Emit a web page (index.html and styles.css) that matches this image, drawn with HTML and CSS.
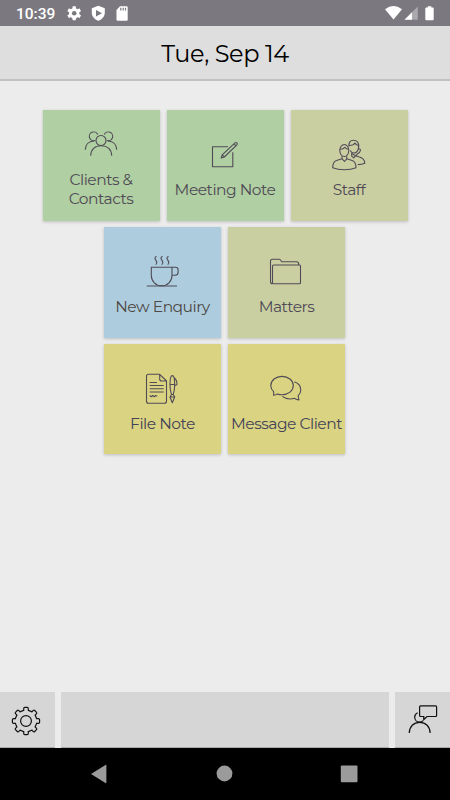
FILE: index.html
```
<!DOCTYPE html>
<html lang="en">
<head>
    <meta charset="UTF-8">
    <meta name="viewport" content="width=device-width, initial-scale=1.0">
    <title>Dashboard</title>
    <link rel="stylesheet" href="styles.css">
</head>
<body>
    <div class="status-bar">
        <span class="clock">10:39</span>
        <svg class="status-icons" width="64" height="18" viewBox="0 0 64 18">
            <g transform="translate(7.2 9.2)">
                <rect x="-1.7" y="-7" width="3.4" height="14" rx=".6"/>
                <rect x="-1.7" y="-7" width="3.4" height="14" rx=".6" transform="rotate(60)"/>
                <rect x="-1.7" y="-7" width="3.4" height="14" rx=".6" transform="rotate(120)"/>
                <circle r="3.7" fill="none" stroke="#fff" stroke-width="3"/>
                <circle r="2.3" fill="#7b797f"/>
            </g>
            <path d="M31.3 1.8l6.5 2.4v4.6c0 3.6-2.6 6.6-6.5 8-3.9-1.4-6.5-4.4-6.5-8V4.2z"/>
            <path d="M29 6l6 3.3-6 3.3z" fill="#7b797f"/>
            <path d="M53 2.2h6.4q1.3 0 1.3 1.3v12q0 1.3-1.3 1.3h-8.6q-1.3 0-1.3-1.3v-9.6z"/>
            <path d="M53.8 3.8v2.6M56.2 3.8v2.6M58.5 3.8v2.6" stroke="#7b797f" stroke-width="1.2"/>
        </svg>
        <svg class="signal-icons" width="50" height="18" viewBox="0 0 50 18">
            <path d="M0 5.2Q8.5-1.2 17 5.2L8.5 15.5z"/>
            <path d="M32.8 2.5v13.3H19.5z" fill="#aaa9ad"/>
            <path d="M27 8.3v7.5h-7.5z"/>
            <path d="M42.7 2.2h3.6v1.3h1.4q1 0 1 1v10.8q0 1-1 1h-6.4q-1 0-1-1V4.5q0-1 1-1h1.4z"/>
        </svg>
    </div>

    <header class="header">
        <h1>Tue, Sep 14</h1>
    </header>

    <main class="tiles">
        <div class="row">
            <a class="tile tall green">
                <svg class="icon" viewBox="0 0 48 48">
                    <circle cx="24" cy="18.5" r="5"/>
                    <path d="M13.7 33.8C13.7 27.5 18 23.8 24.2 23.8S34.7 27.5 34.7 33.8"/>
                    <path d="M18.2 18.5A4.4 4.4 0 1 1 20.7 12.5M29.8 18.5A4.4 4.4 0 1 0 27.3 12.5"/>
                    <path d="M8.3 27.8C8.3 23 11.5 19.3 17 19M39.7 27.8C39.7 23 36.5 19.3 31 19"/>
                </svg>
                <span class="label">Clients &amp; Contacts</span>
            </a>
            <a class="tile green">
                <svg class="icon" viewBox="0 0 48 48">
                    <path d="M27 14.7H11.5v20h20.3V20.3"/>
                    <path d="M20.2 26l1-3.2L34 10.9q1-.8 1.9.1t0 1.9L23.3 25z M21.2 22.8l2.1 2.2M33 11.8l2 2"/>
                </svg>
                <span class="label">Meeting Note</span>
            </a>
            <a class="tile olive">
                <svg class="icon" viewBox="0 0 48 48">
                    <ellipse cx="19.3" cy="18.5" rx="4.5" ry="6"/>
                    <path d="M14.8 17.3q3.5.2 5-2 1.3 2 4 2"/>
                    <path d="M17 24.2v2.5l-5.5 1.8q-3.8 1.3-3.8 7.2 5 2.1 11.7 2.1t11.6-2.1q0-5.9-3.8-7.2l-5.5-1.8v-2.5"/>
                    <path d="M17 26.7l2.5 2.8 2.4-2.8"/>
                    <path d="M24 14.5q-.7-6.2 4.5-6.2 5.3 0 5.2 6.2c-.1 3.5-2 6.5-4.7 6.5-1.7 0-3-1-3.8-2.5"/>
                    <path d="M24 13.5q4.5.1 6-2.5 1 2.5 3.5 2.5v3.8q2.2-.9 1.9 1.2t-2.8 3.2l-1.8 2.1-3.8-2"/>
                    <path d="M26.7 21v3.2l2 1.7 2-2.2 3.8 1.3q5 1.5 5.3 6.2-2.8 1.2-7 1.4"/>
                </svg>
                <span class="label">Staff</span>
            </a>
        </div>
        <div class="row pair">
            <a class="tile blue">
                <svg class="icon" viewBox="0 0 48 48">
                    <path d="M12.3 18.3H33v8c0 6-4.5 10.5-10.3 10.5s-10.4-4.5-10.4-10.5z"/>
                    <path d="M33 18.3h3.5q2.6 0 2.6 2.5v2.5q0 3-3 3H33M7.7 37H38"/>
                    <path d="M17.5 7.2c-4.8 3.3 3.4 4.2-.8 8.5M23.5 7.2c-4.8 3.3 3.4 4.2-.8 8.5M29.5 7.2c-4.8 3.3 3.4 4.2-.8 8.5"/>
                </svg>
                <span class="label">New Enquiry</span>
            </a>
            <a class="tile olive">
                <svg class="icon" viewBox="0 0 48 48">
                    <rect x="9.5" y="16" width="28" height="18.7" rx="1"/>
                    <path d="M9.5 34.7q-2 0-2-2V12.3q0-2 2-2h6.7q1.5 0 2.3 2.4h15.3q2 0 2 3.3"/>
                </svg>
                <span class="label">Matters</span>
            </a>
        </div>
        <div class="row pair">
            <a class="tile yellow">
                <svg class="icon" viewBox="0 0 48 48">
                    <path d="M20.7 8.3H9.5q-2 0-2 2v25q0 2 2 2h16q2 0 2-2V15zM20.7 8.3V13q0 2 2 2h4.8"/>
                    <path d="M10.7 16.5H18M10.7 19.5h14M10.7 22.7h14M10.7 26h14M10.7 29.5l1.5 1.2 1.5-1.2 1.5 1.2 1.5-1.2 1.5.8"/>
                    <path d="M31 18.5c0-4 .7-8.9 2.3-8.9s2.4 4.9 2.4 8.9-.7 8-1.5 10h-1.7c-.8-2-1.5-6-1.5-10zM31 18.5h4.7M34.7 11.2q3.8 3 3.2 7.5l-2.2.9M32.5 28.5l-1.5 2.5 2.3 5.8 2.4-5.8-1.5-2.5M31 31h4.7"/>
                </svg>
                <span class="label">File Note</span>
            </a>
            <a class="tile yellow">
                <svg class="icon" viewBox="0 0 48 48">
                    <path d="M10.5 29.3q.4-2 .1-3.7-2.8-2.4-2.8-6c0-5.2 5-9.2 11.2-9.2s11.3 4 11.3 9.2-5 9.1-11.3 9.1q-2.5 0-4.6-.8-1.6 1.2-3.9 1.4z"/>
                    <path d="M31.3 15.7q6.5 2.2 6.5 8.3 0 3.3-2.6 5.7.1 2.3.8 4.3-2.8-.2-4.3-1.7-7.3 2-12.4-1.9"/>
                </svg>
                <span class="label">Message Client</span>
            </a>
        </div>
    </main>

    <footer class="toolbar">
        <a class="tool settings">
            <svg width="30" height="30" viewBox="-15 -15 30 30">
                <circle r="5.4"/>
                <path id="tooth" d="M-4.06-9.79Q-3.2-10.5-2.3-10.6V-12.3Q-2.3-13.6-1.3-13.6H1.3Q2.3-13.6 2.3-12.3V-10.6Q3.2-10.5 4.06-9.79"/>
                <use href="#tooth" transform="rotate(45)"/>
                <use href="#tooth" transform="rotate(90)"/>
                <use href="#tooth" transform="rotate(135)"/>
                <use href="#tooth" transform="rotate(180)"/>
                <use href="#tooth" transform="rotate(225)"/>
                <use href="#tooth" transform="rotate(270)"/>
                <use href="#tooth" transform="rotate(315)"/>
            </svg>
        </a>
        <div class="tool-space"></div>
        <a class="tool">
            <svg width="30" height="30" viewBox="0 0 30 30">
                <path d="M12.6.9h15q1 0 1 1v8.6q0 1-1 1H19l-3.2 3v-3h-3.2q-1 0-1-1V1.9q0-1 1-1z"/>
                <path d="M9.6 7.8Q6.7 9.2 6.7 12.2c0 2.7 2 4.8 4.8 4.8q2.2 0 3.6-1.4"/>
                <path d="M1.3 28C1.3 21.5 5.7 17.3 11.7 17.3S22.1 21.5 22.1 28"/>
            </svg>
        </a>
    </footer>

    <nav class="nav-bar">
        <svg width="18" height="20" viewBox="0 0 18 20"><path d="M1 10L15.5.9q.9-.4.9.6v17q0 1-.9.6z"/></svg>
        <svg width="18" height="20" viewBox="0 0 18 20"><circle cx="9.5" cy="9.5" r="7.9"/></svg>
        <svg width="18" height="20" viewBox="0 0 18 20"><rect x=".8" y="1.5" width="16.7" height="16.7" rx="1"/></svg>
    </nav>
</body>
</html>
```
FILE: styles.css
```
* {
    box-sizing: border-box;
}
body {
    display: flex;
    flex-direction: column;
    height: 800px;
    margin: 0;
    background-color: #ececec;
    font-family: Montserrat, Inter, sans-serif;
}
.status-bar {
    display: flex;
    align-items: center;
    height: 26px;
    padding: 0 15px 0 16px;
    background-color: #7b797f;
}
.status-bar svg {
    fill: #fff;
}
.clock {
    width: 51px;
    color: #fff;
    font: 500 15.5px Roboto, sans-serif;
    padding-top: 2px;
}
.signal-icons {
    margin-left: auto;
}
.header {
    display: flex;
    align-items: center;
    justify-content: center;
    height: 55px;
    background-color: #dedede;
    border-bottom: 2px solid #c2c2c2;
}
.header h1 {
    margin: 0;
    padding-top: 2px;
    color: #000;
    font-size: 24px;
    font-weight: 400;
    letter-spacing: -0.4px;
}
.tiles {
    display: flex;
    flex-direction: column;
    gap: 6px;
    flex: 1;
    padding-top: 29px;
}
.row {
    display: flex;
    justify-content: center;
    gap: 7px;
}
.pair {
    padding-right: 1px;
}
.tile {
    display: flex;
    flex-direction: column;
    align-items: center;
    justify-content: center;
    width: 117px;
    height: 111px;
    box-shadow: 0 1px 3px rgba(0, 0, 0, 0.2);
}
.tall {
    padding-bottom: 1px;
}
.green {
    background-color: #b0cfa2;
}
.olive {
    background-color: #cacfa2;
}
.blue {
    background-color: #adcdde;
}
.yellow {
    height: 110px;
    background-color: #dad381;
}
.icon {
    width: 48px;
    height: 48px;
    flex: none;
    fill: none;
    stroke: #504b57;
    stroke-width: 1.1;
    stroke-linejoin: round;
}
.label {
    color: #4f4a56;
    font-size: 15.5px;
    line-height: 19px;
    letter-spacing: -0.5px;
    text-align: center;
}
.blue .label {
    color: #4d4844;
}
.yellow .label {
    color: #434259;
}
.toolbar {
    display: flex;
    gap: 6px;
    height: 56px;
}
.tool,
.tool-space {
    background-color: #d6d6d6;
    border-bottom: 1px solid #aaa;
}
.tool {
    display: flex;
    align-items: center;
    justify-content: center;
    width: 55px;
}
.settings {
    padding: 2px 3px 0 0;
}
.tool svg {
    fill: none;
    stroke: #111;
    stroke-width: 1.2;
}
.tool-space {
    flex: 1;
}
.nav-bar {
    display: flex;
    justify-content: space-between;
    align-items: center;
    height: 52px;
    padding: 0 92px 0 90px;
    background-color: #000;
}
.nav-bar svg {
    fill: #9b9b9b;
}
```
